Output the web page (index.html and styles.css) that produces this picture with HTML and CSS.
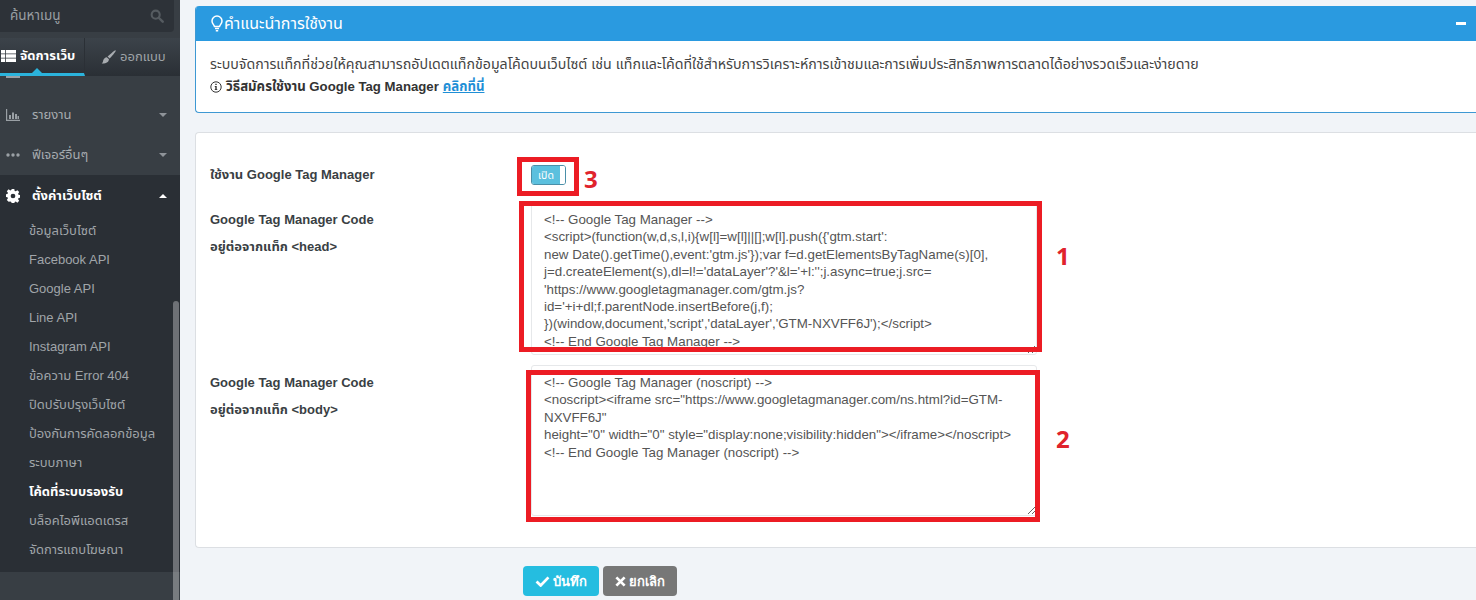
FILE: index.html
```html
<!DOCTYPE html>
<html lang="th">
<head>
<meta charset="utf-8">
<title>Google Tag Manager</title>
<link rel="stylesheet" href="styles.css">
</head>
<body>
<div class="app">
  <aside class="sidebar">
    <div class="search">
      <span class="search-text">ค้นหาเมนู</span>
      <svg class="search-icon" viewBox="0 0 16 16"><circle cx="6.5" cy="6.5" r="4.6" fill="none" stroke="currentColor" stroke-width="2.4"/><path d="M10 10l4.5 4.5" stroke="currentColor" stroke-width="2.8" stroke-linecap="round"/></svg>
    </div>
    <div class="tabs">
      <div class="tab tab-active">
        <svg class="tab-icon" viewBox="0 0 15 12"><path fill="#fff" d="M0 0h4.2v3.4H0zM5 0h10v3.4H5zM0 4.3h4.2v3.4H0zM5 4.3h10v3.4H5zM0 8.6h4.2V12H0zM5 8.6h10V12H5z"/></svg>
        <span>จัดการเว็บ</span>
      </div>
      <div class="tab tab-idle">
        <svg class="tab-icon brush" viewBox="0 0 16 16"><path fill="currentColor" d="M15.6.5c.5.5-.3 1.6-2.5 4.2L9.3 9 7 6.8l4.4-3.7C14 .9 15.100 0 15.600.5zM6.200 7.600l2.300 2.200c-.2 2.600-2.300 4.800-7.800 4.600 1.500-.9 1.300-2 1.700-3.500.5-1.800 2.100-3.100 3.800-3.300z"/></svg>
        <span>ออกแบบ</span>
      </div>
    </div>
    <nav class="menu">
      <div class="item item-peek">
        <svg class="item-icon" viewBox="0 0 14 12"><path fill="currentColor" d="M0 0h14v12H0z"/></svg>
        <span class="item-label">หน้าหลักเว็บไซต์</span>
      </div>
      <div class="item">
        <svg class="item-icon" viewBox="0 0 14 12"><path fill="currentColor" d="M0 0h1.200v10.800H14V12H0zM3 6h2v4H3zM6 3.500h2V10H6zM9 5h2v5H9zM11.500 7h1.500v3h-1.500z"/></svg>
        <span class="item-label">รายงาน</span>
        <span class="caret"></span>
      </div>
      <div class="item">
        <svg class="item-icon" viewBox="0 0 14 4"><circle cx="2" cy="2" r="1.700" fill="currentColor"/><circle cx="7" cy="2" r="1.700" fill="currentColor"/><circle cx="12" cy="2" r="1.700" fill="currentColor"/></svg>
        <span class="item-label">ฟีเจอร์อื่นๆ</span>
        <span class="caret"></span>
      </div>
      <div class="item item-open">
        <svg class="item-icon gear" viewBox="0 0 16 16"><path fill="#fff" fill-rule="evenodd" d="M6.500 0h3l.4 2.200 1.200.5L13 1.400l2.100 2.100-1.300 1.900.5 1.200 2.200.4v3l-2.200.4-.5 1.200 1.300 1.900-2.100 2.100-1.900-1.300-1.200.5-.4 2.200h-3l-.4-2.200-1.200-.5L3 14.600.9 12.500l1.300-1.900-.5-1.200L-.5 9V6l2.200-.4.500-1.200L.9 2.500 3 .4l1.900 1.300 1.200-.5zM8 5.300a2.700 2.700 0 1 0 0 5.400 2.700 2.700 0 0 0 0-5.400z"/></svg>
        <span class="item-label">ตั้งค่าเว็บไซต์</span>
        <span class="caret caret-up"></span>
      </div>
      <ul class="submenu">
        <li>ข้อมูลเว็บไซต์</li>
        <li>Facebook API</li>
        <li>Google API</li>
        <li>Line API</li>
        <li>Instagram API</li>
        <li>ข้อความ Error 404</li>
        <li>ปิดปรับปรุงเว็บไซต์</li>
        <li>ป้องกันการคัดลอกข้อมูล</li>
        <li>ระบบภาษา</li>
        <li class="current">โค้ดที่ระบบรองรับ</li>
        <li>บล็อคไอพีแอดเดรส</li>
        <li>จัดการแถบโฆษณา</li>
      </ul>
    </nav>
    <div class="scrollbar"></div>
  </aside>

  <main class="main">
    <section class="guide">
      <header class="guide-head">
        <h2 class="guide-title">
          <svg class="bulb" viewBox="0 0 12 17"><path fill="none" stroke="#fff" stroke-width="1.500" d="M3.500 11.500C3.200 9.800 1 8.800 1 6a5 5 0 0 1 10 0c0 2.800-2.200 3.800-2.500 5.500z"/><path stroke="#fff" stroke-width="1.500" d="M4 13.500h4M4.800 15.800h2.400"/></svg>
          คำแนะนำการใช้งาน
        </h2>
        <span class="minus"></span>
      </header>
      <div class="guide-body">
        <p class="guide-text">ระบบจัดการแท็กที่ช่วยให้คุณสามารถอัปเดตแท็กข้อมูลโค้ดบนเว็บไซต์ เช่น แท็กและโค้ดที่ใช้สำหรับการวิเคราะห์การเข้าชมและการเพิ่มประสิทธิภาพการตลาดได้อย่างรวดเร็วและง่ายดาย</p>
        <p class="guide-link">
          <svg class="info" viewBox="0 0 12 12"><circle cx="6" cy="6" r="5.200" fill="none" stroke="#333" stroke-width="1"/><path fill="#333" d="M5.300 2.700h1.400v1.300H5.300zM4.800 5h1.900v3.200h.6v.9H4.700v-.9h.6V5.900h-.5z"/></svg>
          <strong>วิธีสมัครใช้งาน Google Tag Manager</strong> <a class="click" href="#">คลิกที่นี่</a>
        </p>
      </div>
    </section>

    <section class="form-card">
      <div class="row row-switch">
        <label class="row-label">ใช้งาน Google Tag Manager</label>
        <div class="switch"><span class="switch-on">เปิด</span><span class="switch-handle"></span></div>
      </div>
      <div class="row row-code">
        <label class="row-label label-head">Google Tag Manager Code<br>อยู่ต่อจากแท็ก &lt;head&gt;</label>
        <textarea class="code code-head" readonly wrap="off"><!-- Google Tag Manager -->
<script>(function(w,d,s,l,i){w[l]=w[l]||[];w[l].push({'gtm.start':
new Date().getTime(),event:'gtm.js'});var f=d.getElementsByTagName(s)[0],
j=d.createElement(s),dl=l!='dataLayer'?'&l='+l:'';j.async=true;j.src=
'https://www.googletagmanager.com/gtm.js?
id='+i+dl;f.parentNode.insertBefore(j,f);
})(window,document,'script','dataLayer','GTM-NXVFF6J');</script>
<!-- End Google Tag Manager --></textarea>
      </div>
      <div class="row row-code row-body">
        <label class="row-label label-body">Google Tag Manager Code<br>อยู่ต่อจากแท็ก &lt;body&gt;</label>
        <textarea class="code code-body" readonly wrap="off"><!-- Google Tag Manager (noscript) -->
<noscript><iframe src="https://www.googletagmanager.com/ns.html?id=GTM-
NXVFF6J"
height="0" width="0" style="display:none;visibility:hidden"></iframe></noscript>
<!-- End Google Tag Manager (noscript) --></textarea>
      </div>
    </section>

    <div class="actions">
      <button class="btn btn-save" type="button">
        <svg class="btn-icon" viewBox="0 0 16 12"><path fill="none" stroke="#fff" stroke-width="3" d="M1.500 6l4.500 4.300L14.500 1.500"/></svg>บันทึก
      </button>
      <button class="btn btn-cancel" type="button">
        <svg class="btn-icon btn-x" viewBox="0 0 12 12"><path fill="none" stroke="#fff" stroke-width="3" d="M1.500 1.500l9 9M10.500 1.500l-9 9"/></svg>ยกเลิก
      </button>
    </div>
  </main>
</div>

<div class="mark mark-3"></div><span class="mark-num num-3">3</span>
<div class="mark mark-1"></div><span class="mark-num num-1">1</span>
<div class="mark mark-2"></div><span class="mark-num num-2">2</span>
</body>
</html>
```
FILE: styles.css
```css
* { box-sizing: border-box; }
html, body { margin: 0; height: 600px; overflow: hidden; }
body {
  position: relative;
  background: #f1f4f8;
  font-family: "Liberation Sans", "Noto Sans Thai", "Noto Sans", sans-serif;
  color: #333;
}
.app { display: flex; width: 1476px; height: 600px; }

/* sidebar */
.sidebar {
  position: relative;
  flex: 0 0 180px;
  height: 600px;
  background: #383e44;
  overflow: hidden;
}
.search {
  display: flex;
  align-items: center;
  justify-content: space-between;
  height: 32px;
  margin-right: 6px;
  padding: 0 10px 0 10px;
  background: #2d3238;
  border-radius: 0 0 4px 0;
}
.search-text { font-size: 13.500px; color: #9a9fa3; }
.search-icon { width: 14px; height: 14px; color: #555b60; }
.tabs {
  display: flex;
  height: 38px;
  margin-top: 6px;
  background: linear-gradient(#3c434a, #2a2f35);
  font-size: 13px;
  position: relative;
  z-index: 1;
}
.tab { display: flex; align-items: center; gap: 4px; white-space: nowrap; }
.tab-active {
  position: relative;
  flex: 0 0 85px;
  padding-left: 1px;
  color: #fff;
  font-weight: bold;
  border-bottom: 3px solid #2bb3dc;
  border-right: 1px solid #2b3036;
}
.tab-active::after {
  content: "";
  position: absolute;
  left: 32px;
  bottom: 0;
  border: 5px solid transparent;
  border-top: 0;
  border-bottom-color: #2bb3dc;
}
.tab-idle { flex: 1; padding-left: 16px; color: #9fa4a8; }
.tab-icon { width: 15px; height: 12px; flex: none; }
.brush { width: 15px; height: 15px; color: #a8acb0; }

.item {
  display: flex;
  align-items: center;
  height: 40px;
  padding: 0 13px 0 6px;
  font-size: 13px;
  color: #a6abaf;
}
.item-peek { margin: -24px 0 3px; }
.item-icon { width: 14px; height: 12px; flex: none; margin-right: 12px; color: #9aa0a5; }
.item-label { flex: 1; white-space: nowrap; }
.caret {
  width: 0;
  height: 0;
  border: 4px solid transparent;
  border-top: 4px solid #8f9499;
  border-bottom: 0;
}
.item-open { height: 38px; padding-top: 3px; background: #2a2f35; color: #fff; font-weight: bold; }
.item-open .item-icon { height: 14px; }
.caret-up { border-top: 0; border-bottom: 4px solid #fff; }
.submenu {
  margin: 0;
  padding: 3px 0 8px;
  list-style: none;
  background: #2a2f35;
}
.submenu li {
  height: 29px;
  padding-left: 29px;
  font-size: 13px;
  line-height: 29px;
  color: #a0a5a9;
  white-space: nowrap;
}
.submenu li.current { color: #fff; font-weight: bold; }
.scrollbar {
  position: absolute;
  left: 173px;
  top: 301px;
  width: 6px;
  height: 299px;
  border-radius: 3px 3px 0 0;
  background: rgba(255,255,255,.32);
}

/* main */
.main { flex: 1; min-width: 0; padding: 6px 0 0 15px; }
.guide {
  height: 107px;
  background: #fff;
  border: 1px solid #3d98d3;
  border-width: 0 0 1px 1px;
  border-radius: 4px 0 0 4px;
  overflow: hidden;
}
.guide-head {
  display: flex;
  align-items: center;
  justify-content: space-between;
  height: 35px;
  padding: 0 10px 0 15px;
  background: #2a9ae0;
  color: #fff;
}
.guide-title {
  display: flex;
  align-items: center;
  gap: 1px;
  margin: 0;
  font-size: 16px;
  font-weight: normal;
}
.bulb { width: 12px; height: 17px; }
.minus { width: 10px; height: 3px; background: #fff; }
.guide-body { padding: 14px 14px 0; }
.guide-text { margin: 0; font-size: 14.200px; line-height: 18px; white-space: nowrap; color: #444; }
.guide-link { display: flex; align-items: center; gap: 4px; margin: 5px 0 0; font-size: 13.200px; line-height: 18px; }
.info { width: 12px; height: 12px; }
.click { color: #1f8fd6; font-weight: bold; }

.form-card {
  height: 416px;
  margin-top: 19px;
  padding: 27px 0 0 14px;
  background: #fff;
  border: 1px solid #dcdfe3;
  border-right: 0;
  border-radius: 4px 0 0 4px;
}
.row { display: flex; align-items: flex-start; }
.row-label {
  flex: 0 0 321px;
  font-size: 13px;
  line-height: 27px;
  font-weight: bold;
  color: #3a3f44;
}
.row-switch { height: 40px; }
.row-switch .row-label { line-height: 29px; }
.label-head { padding-top: 6px; }
.label-body { padding-top: 4px; }
.switch {
  display: flex;
  width: 35px;
  height: 20px;
  margin-top: 5px;
  border: 1px solid #4a8fa8;
  border-radius: 3px;
  overflow: hidden;
  background: #fff;
}
.switch-on {
  flex: 1;
  background: #5bc0de;
  color: #fff;
  font-size: 10.500px;
  line-height: 18px;
  text-align: center;
}
.switch-handle { flex: 0 0 5px; background: #fff; }
.code {
  width: 506px;
  flex: none;
  padding: 0 12px;
  border: 1px solid #e6e8ea;
  border-radius: 3px;
  background: #fff;
  font: 13.330px/17.400px "Liberation Sans", sans-serif;
  color: #555;
  outline: none;
  white-space: pre;
  overflow: hidden;
  resize: both;
}
.code-head { height: 153px; margin-top: 2px; padding-top: 8px; }
.row-body { margin-top: 10px; }
.code-body { height: 151px; padding-top: 8px; }

.actions { display: flex; gap: 4px; margin-top: 18px; padding-left: 328px; }
.btn {
  display: flex;
  align-items: center;
  justify-content: center;
  gap: 3px;
  height: 30px;
  border: 0;
  border-radius: 4px;
  color: #fff;
  font: bold 13px "Liberation Sans", sans-serif;
}
.btn-save { width: 76px; background: #25bde0; }
.btn-cancel { width: 74px; background: #777; }
.btn-icon { width: 15px; height: 11px; }
.btn-x { width: 11px; }

/* red annotations laid over the screenshot */
.mark { position: absolute; border: 5px solid #ec1c24; pointer-events: none; }
.mark-3 { left: 517px; top: 157px; width: 62px; height: 39px; }
.mark-1 { left: 519px; top: 201px; width: 523px; height: 151px; }
.mark-2 { left: 526px; top: 370px; width: 514px; height: 152px; }
.mark-num { position: absolute; font: bold 24px "Open Sans", sans-serif; color: #e0232c; line-height: 1; }
.num-3 { left: 584px; top: 167px; }
.num-1 { left: 1056px; top: 244px; }
.num-2 { left: 1056px; top: 427px; }
```
